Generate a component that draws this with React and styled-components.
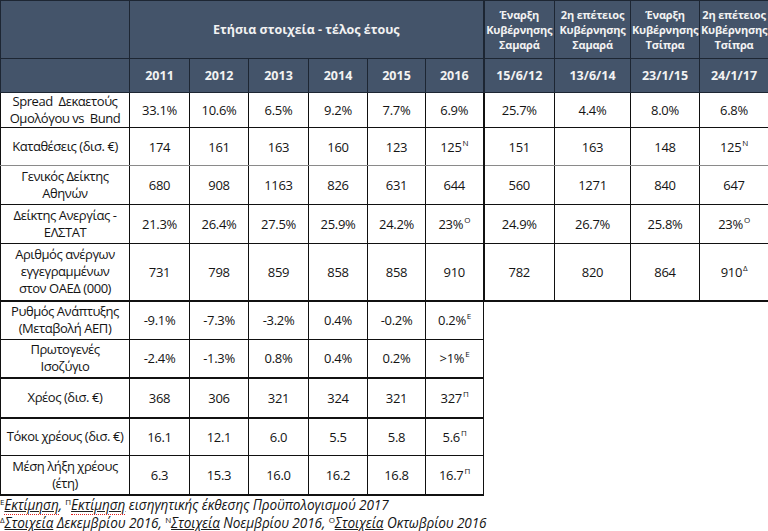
import React from 'react';
import styled, { createGlobalStyle } from 'styled-components';

const GlobalStyle = createGlobalStyle`
  html, body {
    margin: 0;
    padding: 0;
    background: #ffffff;
  }
  body {
    font-family: "Open Sans", "Noto Sans", "DejaVu Sans", sans-serif;
    color: #141414;
  }
`;

const Page = styled.div`
  width: 768px;
  height: 531px;
  overflow: hidden;
  background: #fff;
`;

const Table = styled.table`
  border-collapse: collapse;
  table-layout: fixed;
  width: 768px;
`;

const HeadRow = styled.tr`
  height: ${p => p.h}px;
`;

const Row = styled.tr`
  height: ${p => p.h}px;
`;

const HeadCell = styled.th`
  background: #44546a;
  color: #f2f2f2;
  font-weight: 700;
  font-size: ${p => (p.small ? '11px' : '12.5px')};
  line-height: ${p => (p.small ? '15px' : '16px')};
  text-align: center;
  vertical-align: middle;
  padding: 0 1px;
  border: 1px solid #1d2633;
  border-left-width: ${p => (p.thickLeft ? 2 : 1)}px;
  letter-spacing: ${p => (p.small ? '-0.2px' : '0')};
`;

const LabelCell = styled.td`
  font-size: 13px;
  line-height: 17px;
  text-align: center;
  vertical-align: middle;
  padding: 0;
  border: 1px solid #111;
  border-bottom-width: ${p => (p.thickBottom ? 2 : 1)}px;
  border-bottom-color: ${p => (p.softBottom ? '#8a8a8a' : '#111')};
  white-space: nowrap;
  letter-spacing: -0.45px;
`;

const ValueCell = styled.td`
  font-size: 13px;
  text-align: center;
  vertical-align: middle;
  padding: 0;
  border: 1px solid #111;
  border-left-width: ${p => (p.thickLeft ? 2 : 1)}px;
  border-left-color: ${p => (p.grayLeft ? '#9a9a9a' : '#111')};
  border-bottom-width: ${p => (p.thickBottom ? 2 : 1)}px;
  border-bottom-color: ${p => (p.softBottom ? '#8a8a8a' : '#111')};
  letter-spacing: -0.3px;
`;

const Sup = styled.sup`
  font-size: 8px;
  line-height: 0;
  vertical-align: 6px;
  margin-left: 1px;
`;

const Footnotes = styled.div`
  font-style: italic;
  font-size: 13.6px;
  line-height: 18px;
  padding: 0;
  letter-spacing: -0.1px;
`;

const FootLine = styled.div`
  white-space: nowrap;
`;

const FootSup = styled.sup`
  font-size: 8px;
  line-height: 0;
  vertical-align: 5px;
  font-style: normal;
`;

const Marked = styled.span`
  text-decoration: underline;
  text-decoration-color: #222;
  text-underline-offset: 1px;
  border-bottom: 1px dotted #e02020;
`;

const colWidths = [129, 60, 59, 60, 59, 58, 58, 71, 76, 69, 69];

const years = ['2011', '2012', '2013', '2014', '2015', '2016'];

const governments = [
  { title: ['Έναρξη', 'Κυβέρνησης', 'Σαμαρά'], date: '15/6/12' },
  { title: ['2η επέτειος', 'Κυβέρνησης', 'Σαμαρά'], date: '13/6/14' },
  { title: ['Έναρξη', 'Κυβέρνησης', 'Τσίπρα'], date: '23/1/15' },
  { title: ['2η επέτειος', 'Κυβέρνησης', 'Τσίπρα'], date: '24/1/17' },
];

const rows = [
  {
    label: ['Spread\u00a0\u00a0Δεκαετούς', 'Ομολόγου vs\u00a0\u00a0Bund'],
    h: 33,
    values: ['33.1%', '10.6%', '6.5%', '9.2%', '7.7%', '6.9%'],
    gov: ['25.7%', '4.4%', '8.0%', '6.8%'],
  },
  {
    label: ['Καταθέσεις (δισ. €)'],
    h: 38,
    soft: true,
    values: ['174', '161', '163', '160', '123', ['125', 'N']],
    gov: ['151', '163', '148', ['125', 'N']],
  },
  {
    label: ['Γενικός Δείκτης', 'Αθηνών'],
    h: 39,
    values: ['680', '908', '1163', '826', '631', '644'],
    gov: ['560', '1271', '840', '647'],
  },
  {
    label: ['Δείκτης Ανεργίας -', 'ΕΛΣΤΑΤ'],
    h: 39,
    values: ['21.3%', '26.4%', '27.5%', '25.9%', '24.2%', ['23%', 'O']],
    gov: ['24.9%', '26.7%', '25.8%', ['23%', 'O']],
  },
  {
    label: ['Αριθμός ανέργων', 'εγγεγραμμένων', 'στον ΟΑΕΔ (000)'],
    h: 57,
    thick: true,
    values: ['731', '798', '859', '858', '858', '910'],
    gov: ['782', '820', '864', ['910', 'Δ']],
  },
  {
    label: ['Ρυθμός Ανάπτυξης', '(Μεταβολή ΑΕΠ)'],
    h: 39,
    values: ['-9.1%', '-7.3%', '-3.2%', '0.4%', '-0.2%', ['0.2%', 'E']],
  },
  {
    label: ['Πρωτογενές', 'Ισοζύγιο'],
    h: 38,
    thick: true,
    values: ['-2.4%', '-1.3%', '0.8%', '0.4%', '0.2%', ['>1%', 'E']],
  },
  {
    label: ['Χρέος (δισ. €)'],
    h: 40,
    thick: true,
    values: ['368', '306', '321', '324', '321', ['327', 'Π']],
  },
  {
    label: ['Τόκοι χρέους (δισ. €)'],
    h: 38,
    values: ['16.1', '12.1', '6.0', '5.5', '5.8', ['5.6', 'Π']],
  },
  {
    label: ['Μέση λήξη χρέους', '(έτη)'],
    h: 39,
    thick: true,
    values: ['6.3', '15.3', '16.0', '16.2', '16.8', ['16.7', 'Π']],
  },
];

const Value = ({ v }) =>
  Array.isArray(v) ? (
    <>
      {v[0]}
      <Sup>{v[1]}</Sup>
    </>
  ) : (
    v
  );

const Label = ({ lines }) =>
  lines.map((line, i) => (
    <React.Fragment key={i}>
      {i > 0 && <br />}
      {line}
    </React.Fragment>
  ));

const App = () => (
  <Page>
    <GlobalStyle />
    <Table>
      <colgroup>
        {colWidths.map((w, i) => (
          <col key={i} style={{ width: w }} />
        ))}
      </colgroup>
      <thead>
        <HeadRow h={58}>
          <HeadCell />
          <HeadCell colSpan={6}>Ετήσια στοιχεία - τέλος έτους</HeadCell>
          {governments.map((g, i) => (
            <HeadCell key={i} small thickLeft={i === 0}>
              <Label lines={g.title} />
            </HeadCell>
          ))}
        </HeadRow>
        <HeadRow h={34}>
          <HeadCell />
          {years.map(y => (
            <HeadCell key={y}>{y}</HeadCell>
          ))}
          {governments.map((g, i) => (
            <HeadCell key={g.date} thickLeft={i === 0}>
              {g.date}
            </HeadCell>
          ))}
        </HeadRow>
      </thead>
      <tbody>
        {rows.map((r, ri) => (
          <Row key={ri} h={r.h}>
            <LabelCell thickBottom={r.thick} softBottom={r.soft}>
              <Label lines={r.label} />
            </LabelCell>
            {r.values.map((v, i) => (
              <ValueCell
                key={i}
                grayLeft={i === 2}
                thickBottom={r.thick}
                softBottom={r.soft}
              >
                <Value v={v} />
              </ValueCell>
            ))}
            {r.gov &&
              r.gov.map((v, i) => (
                <ValueCell
                  key={'g' + i}
                  thickLeft={i === 0}
                  thickBottom={r.thick}
                  softBottom={r.soft}
                >
                  <Value v={v} />
                </ValueCell>
              ))}
          </Row>
        ))}
      </tbody>
    </Table>
    <Footnotes>
      <FootLine>
        <FootSup>Ε</FootSup>
        <Marked>Εκτίμηση</Marked>, <FootSup>Π</FootSup>
        <Marked>Εκτίμηση</Marked> εισηγητικής έκθεσης Προϋπολογισμού 2017
      </FootLine>
      <FootLine>
        <FootSup>Δ</FootSup>
        <Marked>Στοιχεία</Marked> Δεκεμβρίου 2016, <FootSup>Ν</FootSup>
        <Marked>Στοιχεία</Marked> Νοεμβρίου 2016, <FootSup>Ο</FootSup>
        <Marked>Στοιχεία</Marked> Οκτωβρίου 2016
      </FootLine>
    </Footnotes>
  </Page>
);

export default App;
